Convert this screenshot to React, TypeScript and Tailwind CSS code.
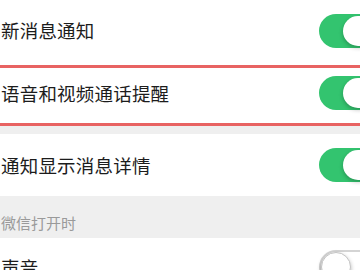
function Toggle({ on }: { on: boolean }) {
  return (
    <div
      className={
        on
          ? "relative h-[34px] w-[56px] shrink-0 rounded-full bg-[#33c46f] -mr-[19px]"
          : "relative h-[34px] w-[56px] shrink-0 rounded-full bg-white border-[2px] border-[#d4d4d4] -mr-[19px]"
      }
    >
      <div
        className={
          on
            ? "absolute top-[2px] right-[2px] h-[30px] w-[30px] rounded-full bg-white shadow-[0_2px_4px_rgba(0,0,0,0.25)]"
            : "absolute top-0 left-0 h-[30px] w-[30px] rounded-full bg-white border border-[#c4c4c4] shadow-[0_2px_4px_rgba(0,0,0,0.3)]"
        }
      />
    </div>
  );
}

function Row({
  label,
  on,
  className,
}: {
  label: string;
  on: boolean;
  className: string;
}) {
  return (
    <div
      className={
        "flex items-center justify-between bg-white pl-[1px] pr-[4px] " +
        className
      }
    >
      <span className="text-[18.5px] leading-none text-[#1c1c1c] tracking-[0.2px]">
        {label}
      </span>
      <Toggle on={on} />
    </div>
  );
}

export default function App() {
  return (
    <div
      className="w-[360px] h-[270px] overflow-hidden bg-[#efefef] flex flex-col"
      style={{ fontFamily: '"Noto Sans CJK SC", "Noto Sans", sans-serif' }}
    >
      <Row label="新消息通知" on className="h-[65px] shrink-0 pb-[4px]" />
      <div className="h-[3px] shrink-0 bg-[#e86362]" />
      <Row label="语音和视频通话提醒" on className="h-[55px] shrink-0 pb-[5px]" />
      <div className="h-[3px] shrink-0 bg-[#e86362]" />
      <div className="h-[8px] shrink-0" />
      <Row label="通知显示消息详情" on className="h-[62px] shrink-0" />
      <div className="h-[42px] shrink-0 flex items-end pb-[8px] pl-[1px]">
        <span className="text-[15px] leading-none text-[#9a9a9a]">
          微信打开时
        </span>
      </div>
      <Row label="声音" on={false} className="h-[56px] shrink-0 pt-[2px]" />
    </div>
  );
}
